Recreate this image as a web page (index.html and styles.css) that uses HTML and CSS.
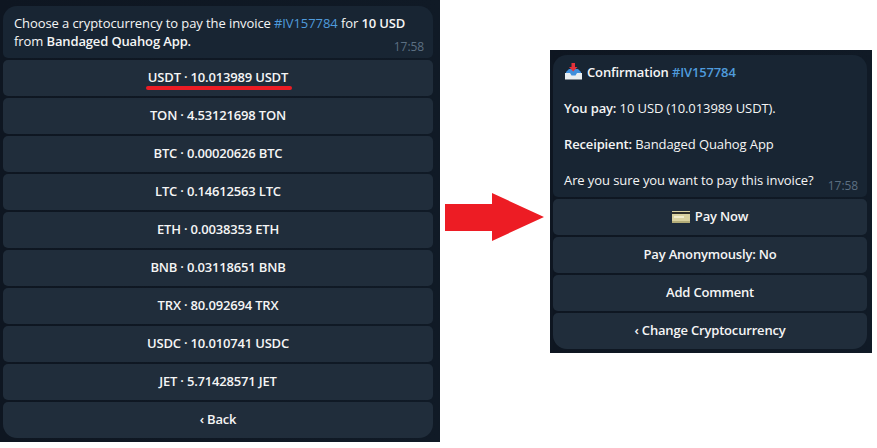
FILE: index.html
```html
<!DOCTYPE html>
<html lang="en">
<head>
    <meta charset="UTF-8">
    <title>Invoice payment</title>
    <link rel="stylesheet" href="styles.css">
</head>
<body>
    <div class="chat chat-left">
        <div class="bubble">
            <p class="msg">Choose a cryptocurrency to pay the invoice <span class="link">#IV157784</span> for <b>10 USD</b> from <b>Bandaged Quahog App.</b></p>
            <span class="time">17:58</span>
        </div>
        <div class="keyboard">
            <div class="key"><span class="marked">USDT · 10.013989 USDT</span></div>
            <div class="key">TON · 4.53121698 TON</div>
            <div class="key">BTC · 0.00020626 BTC</div>
            <div class="key">LTC · 0.14612563 LTC</div>
            <div class="key">ETH · 0.0038353 ETH</div>
            <div class="key">BNB · 0.03118651 BNB</div>
            <div class="key">TRX · 80.092694 TRX</div>
            <div class="key">USDC · 10.010741 USDC</div>
            <div class="key">JET · 5.71428571 JET</div>
            <div class="key key-last">‹ Back</div>
        </div>
    </div>

    <svg class="arrow" width="100" height="48" viewBox="0 0 100 48">
        <path d="M0 11H47V0L99 24L47 48V38H0Z" fill="#ed1c24"/>
    </svg>

    <div class="chat chat-right">
        <div class="bubble">
            <p class="msg title">
                <svg class="emoji" width="19" height="18" viewBox="0 0 19 18">
                    <path d="M2 9L5 6H14L17 9V15H2Z" fill="#3f8fdc"/>
                    <path d="M7.5 0H11V4H13.5L9.2 8.5L5 4H7.5Z" fill="#e5323a"/>
                    <path d="M1 10H6L7.5 12.5H11.5L13 10H18V16.5H1Z" fill="#e8edf0"/>
                </svg>
                <span><b>Confirmation</b> <b class="link">#IV157784</b></span>
            </p>
            <p class="msg"><b>You pay:</b> 10 USD (10.013989 USDT).</p>
            <p class="msg"><b>Receipient:</b> Bandaged Quahog App</p>
            <p class="msg">Are you sure you want to pay this invoice?</p>
            <span class="time">17:58</span>
        </div>
        <div class="keyboard">
            <div class="key"><svg class="emoji" width="18" height="12" viewBox="0 0 18 12">
                    <rect width="18" height="12" fill="#d9d2a0"/>
                    <rect y="1" width="18" height="2" fill="#2f2f28"/>
                    <rect x="2" y="5" width="10" height="2" fill="#f1eccb"/>
                    <rect y="10" width="18" height="2" fill="#b3ac78"/>
                </svg><span>Pay Now</span></div>
            <div class="key">Pay Anonymously: No</div>
            <div class="key">Add Comment</div>
            <div class="key key-last">‹ Change Cryptocurrency</div>
        </div>
    </div>
</body>
</html>
```

FILE: styles.css
```css
* {
    margin: 0;
    padding: 0;
    box-sizing: border-box;
}

body {
    width: 877px;
    height: 448px;
    background-color: #ffffff;
    font-family: "Open Sans", sans-serif;
    font-size: 13px;
    letter-spacing: -0.09px;
    color: #f5f5f5;
    display: flex;
    align-items: flex-start;
    overflow: hidden;
}

.chat {
    background: linear-gradient(90deg, #0e1621, #101a26);
    flex-shrink: 0;
}

.chat-left {
    width: 440px;
    height: 442px;
    padding: 6px 7px 0 3px;
}

.chat-right {
    width: 322px;
    height: 303px;
    margin-top: 50px;
    padding: 5px 5px 0 3px;
}

.arrow {
    margin: 193px 5px 0 5px;
    flex-shrink: 0;
}

.bubble {
    position: relative;
    background-color: #182533;
    border-radius: 14px 14px 5px 5px;
    padding: 8px 11px 6px;
    line-height: 18px;
}

.chat-left .bubble {
    height: 52px;
}

.chat-right .bubble {
    height: 142px;
}

.chat-right .msg {
    margin-bottom: 18px;
}

.chat-right .msg:last-of-type {
    margin-bottom: 0;
}

.title {
    display: flex;
    align-items: center;
    gap: 4px;
}

b {
    font-weight: 600;
    letter-spacing: -0.14px;
}

.link {
    color: #4f9bdc;
}

.time {
    position: absolute;
    right: 9px;
    bottom: 2px;
    font-size: 12px;
    color: #5c6f82;
}

.keyboard {
    display: flex;
    flex-direction: column;
    gap: 2px;
    margin-top: 2px;
}

.key {
    height: 36px;
    padding-bottom: 2px;
    background-color: #202d3b;
    border-radius: 5px;
    display: flex;
    align-items: center;
    justify-content: center;
    gap: 5px;
    font-weight: 600;
    letter-spacing: -0.18px;
}

.key .emoji {
    margin-top: 2px;
}

.key-last {
    border-radius: 5px 5px 14px 14px;
}

.marked {
    position: relative;
}

/* hand drawn red underline on the first option */
.marked::after {
    content: "";
    position: absolute;
    left: -2px;
    right: -4px;
    bottom: -4px;
    height: 4px;
    border-radius: 2px;
    background-color: #ed1c24;
}
```
